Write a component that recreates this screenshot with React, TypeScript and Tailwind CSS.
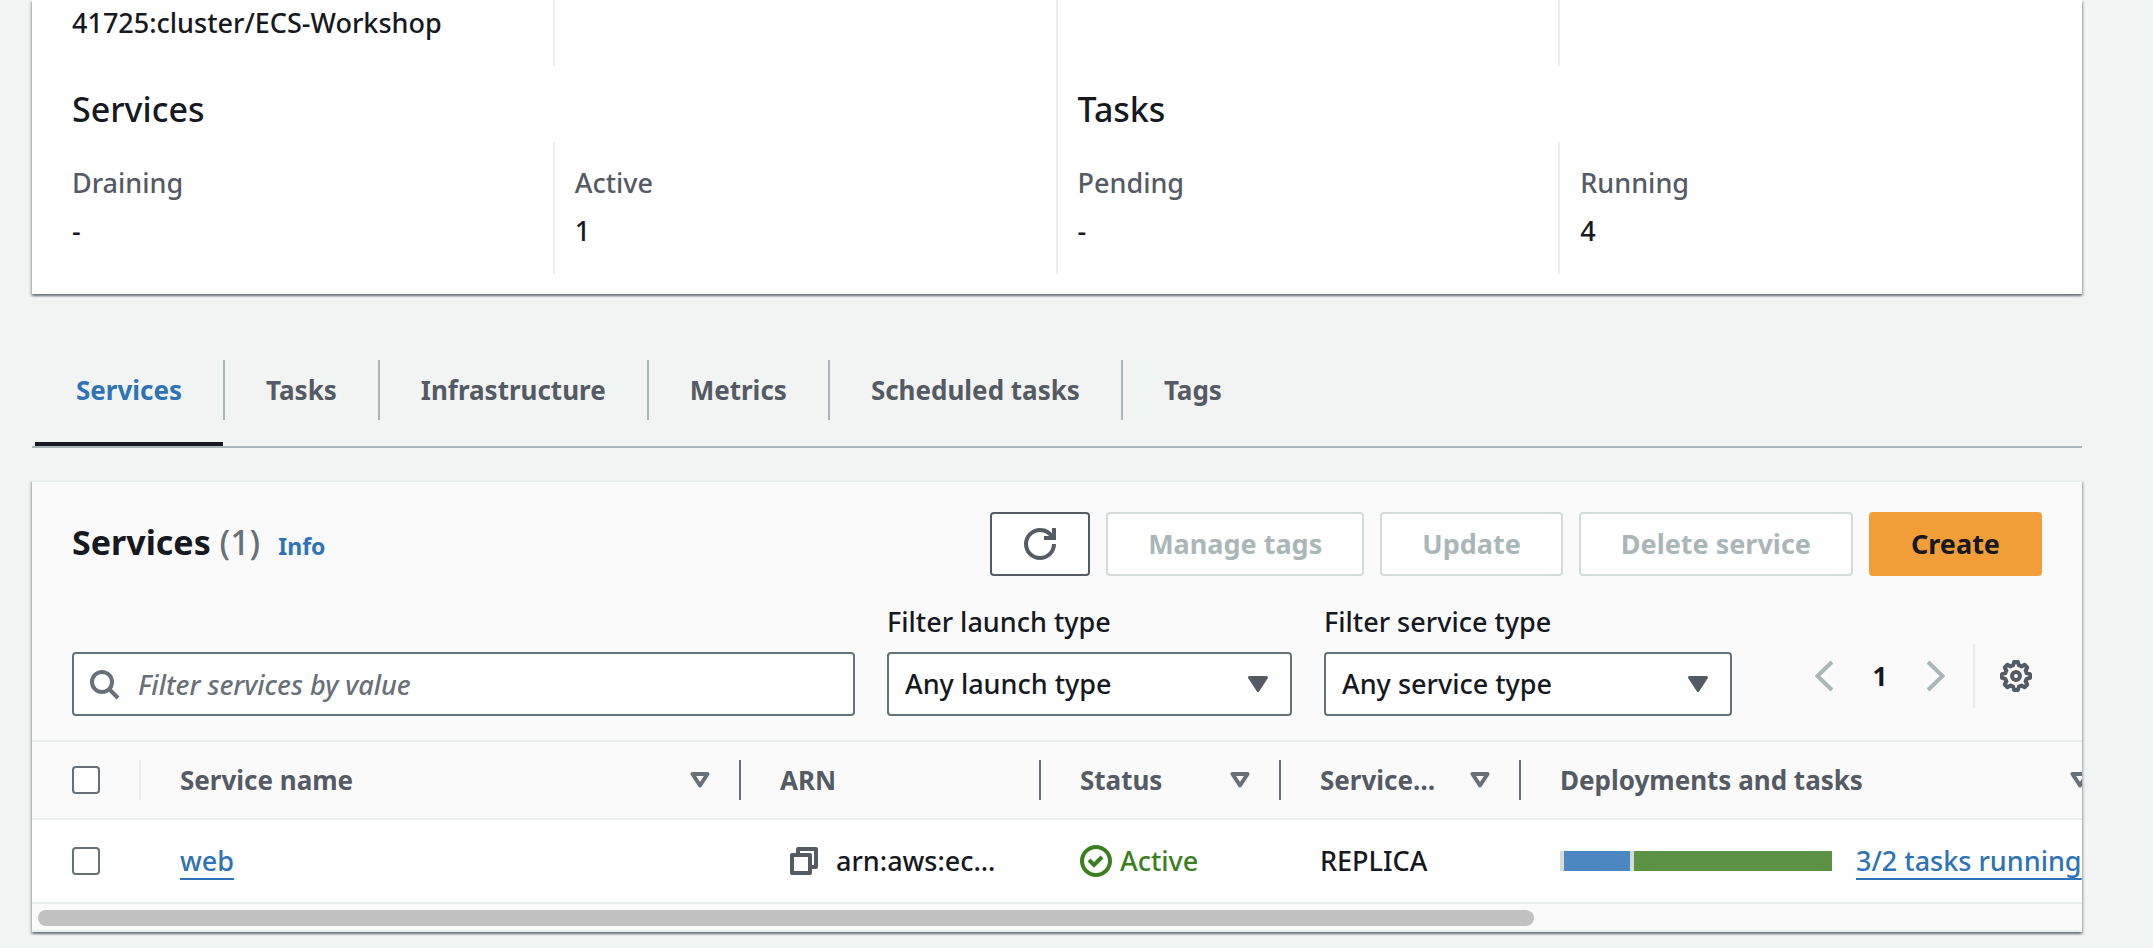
import type { ReactNode } from 'react';

const tabs = ['Services', 'Tasks', 'Infrastructure', 'Metrics', 'Scheduled tasks', 'Tags'];

const columns = [
  { label: 'Service name', width: 'w-[600px]', sortable: true },
  { label: 'ARN', width: 'w-[300px]', sortable: false },
  { label: 'Status', width: 'w-[240px]', sortable: true },
  { label: 'Service…', width: 'w-[240px]', sortable: true },
  { label: 'Deployments and tasks', width: 'w-[600px]', sortable: true },
];

const cardShadow =
  'shadow-[0_2px_2px_0_rgba(0,28,36,0.4),2px_2px_2px_0_rgba(0,28,36,0.15),-2px_2px_2px_0_rgba(0,28,36,0.15)]';

function Stat({ label, value, divider }: { label: string; value: string; divider: boolean }) {
  return (
    <div
      className={`border-l-2 pt-[21px] pb-[23px] pl-5 ${divider ? 'border-[#eaeded]' : 'border-transparent'}`}
    >
      <dt className="text-[#545b64]">{label}</dt>
      <dd className="mt-2">{value}</dd>
    </div>
  );
}

function SummaryCard() {
  return (
    <section className={`bg-white pr-[21px] pb-5 pl-[18px] ${cardShadow}`}>
      <div className="grid grid-cols-4">
        <p className="border-l-2 border-transparent pt-[3px] pb-[23px] pl-5">41725:cluster/ECS-Workshop</p>
        <div className="border-l-2 border-[#eaeded]" />
        <div className="border-l-2 border-[#eaeded]" />
        <div className="border-l-2 border-[#eaeded]" />
      </div>
      <div className="grid grid-cols-2">
        <h3 className="border-l-2 border-transparent pt-[23px] pb-[13px] pl-5 text-[34px] leading-10">Services</h3>
        <h3 className="border-l-2 border-[#eaeded] pt-[23px] pb-[13px] pl-5 text-[34px] leading-10">Tasks</h3>
      </div>
      <dl className="grid grid-cols-4">
        <Stat label="Draining" value="-" divider={false} />
        <Stat label="Active" value="1" divider />
        <Stat label="Pending" value="-" divider />
        <Stat label="Running" value="4" divider />
      </dl>
    </section>
  );
}

function Tabs() {
  return (
    <nav className="mt-[66px] flex border-b-2 border-[#aab7b8] pl-[3px]" role="tablist">
      {tabs.map((tab, i) => (
        <button
          key={tab}
          type="button"
          role="tab"
          aria-selected={i === 0}
          className={`flex flex-col text-[26px] font-bold ${i === 0 ? 'text-[#2e73b8]' : 'text-[#545b64]'}`}
        >
          <span
            className={`mb-[22px] flex h-[60px] items-center px-[41px] ${i < tabs.length - 1 ? 'border-r-2 border-[#aab7b8]' : ''}`}
          >
            {tab}
          </span>
          <span className={`mr-0.5 h-1 self-stretch ${i === 0 ? 'bg-[#16191f]' : ''}`} />
        </button>
      ))}
    </nav>
  );
}

function DisabledButton({ children }: { children: ReactNode }) {
  return (
    <button
      type="button"
      disabled
      className="h-16 rounded-[4px] border-2 border-[#d5dbdb] bg-white px-10 text-[27px] font-bold text-[#aab7b8]"
    >
      {children}
    </button>
  );
}

function RefreshIcon() {
  return (
    <svg className="size-8" viewBox="0 0 16 16" fill="none" stroke="currentColor" strokeWidth="2">
      <path d="M15 8c0 3.87-3.13 7-7 7s-7-3.13-7-7 3.13-7 7-7c2.79 0 5.2 1.63 6.33 4" />
      <path d="M10 5h5V0" />
    </svg>
  );
}

function SearchIcon() {
  return (
    <svg
      className="pointer-events-none absolute top-4 left-4 size-8 text-[#687078]"
      viewBox="0 0 16 16"
      fill="none"
      stroke="currentColor"
      strokeWidth="2"
    >
      <circle cx="7" cy="7" r="5" />
      <path d="m15 15-4.5-4.5" />
    </svg>
  );
}

function GearIcon() {
  return (
    <svg className="size-8" viewBox="0 0 16 16" fill="none" stroke="currentColor" strokeWidth="2" strokeLinejoin="round">
      <path d="M15 8.950v-1.900l-1.700-.5a5.500 5.500 0 0 0-.52-1.250l.85-1.570-1.360-1.360-1.570.85a5.500 5.500 0 0 0-1.250-.52L8.950 1h-1.900l-.5 1.700a5.500 5.500 0 0 0-1.250.52l-1.570-.85-1.360 1.360.85 1.570a5.500 5.500 0 0 0-.52 1.250L1 7.050v1.900l1.700.5c.12.440.3.860.52 1.250l-.85 1.570 1.360 1.360 1.570-.85c.390.220.810.4 1.250.52l.5 1.700h1.900l.5-1.700a5.500 5.500 0 0 0 1.250-.52l1.570.85 1.360-1.360-.85-1.570c.220-.390.4-.810.52-1.250z" />
      <circle cx="8" cy="8" r="2" />
    </svg>
  );
}

function ChevronIcon({ flip }: { flip?: boolean }) {
  return (
    <svg
      className={`h-8 w-5 ${flip ? 'rotate-180' : ''}`}
      viewBox="0 0 20 32"
      fill="none"
      stroke="currentColor"
      strokeWidth="4"
    >
      <path d="M18 2 3.500 16 18 30" />
    </svg>
  );
}

function SortIcon() {
  return (
    <svg
      className="h-4 w-5 shrink-0 text-[#687078]"
      viewBox="0 0 20 16"
      fill="none"
      stroke="currentColor"
      strokeWidth="4"
      strokeLinejoin="round"
    >
      <path d="M2.500 2h15L10 13.500z" />
    </svg>
  );
}

function CopyIcon() {
  return (
    <svg className="size-7" viewBox="0 0 28 28" fill="none" stroke="currentColor" strokeWidth="4" strokeLinejoin="round">
      <path d="M8 6V2h18v18h-4" />
      <path d="M2 8h18v18H2z" />
    </svg>
  );
}

function StatusIcon() {
  return (
    <svg className="size-8" viewBox="0 0 32 32" fill="none" stroke="currentColor" strokeWidth="4">
      <circle cx="16" cy="16" r="14" />
      <path d="m9 15 5 5 8-8" />
    </svg>
  );
}

function FilterSelect({ id, label, option, width }: { id: string; label: string; option: string; width: string }) {
  return (
    <div className={`shrink-0 ${width}`}>
      <label htmlFor={id} className="block">
        {label}
      </label>
      <div className="relative mt-[10px]">
        <select
          id={id}
          className="block h-16 w-full appearance-none rounded-[4px] border-2 border-[#687078] bg-white pr-12 pl-4"
        >
          <option>{option}</option>
        </select>
        <svg
          className="pointer-events-none absolute top-6 right-6 h-4 w-5"
          viewBox="0 0 20 16"
          fill="#545b64"
          stroke="#545b64"
          strokeWidth="3"
          strokeLinejoin="round"
        >
          <path d="M1.500 1.500h17L10 14.500z" />
        </svg>
      </div>
    </div>
  );
}

function Checkbox({ label }: { label: string }) {
  return (
    <input
      type="checkbox"
      aria-label={label}
      className="block size-7 appearance-none rounded-[4px] border-2 border-[#687078] bg-white"
    />
  );
}

function ServicesTable() {
  return (
    <div className="overflow-hidden border-t-2 border-[#eaeded]">
      <table className="w-[2089px] table-fixed border-separate border-spacing-0 text-left">
        <thead>
          <tr className="h-[78px]">
            <th className="w-[109px] border-b-2 border-[#eaeded] p-0">
              <div className="flex h-10 items-center border-r-2 border-[#eaeded] pl-10">
                <Checkbox label="Select all services" />
              </div>
            </th>
            {columns.map((column, i) => (
              <th key={column.label} className={`border-b-2 border-[#eaeded] p-0 ${column.width}`}>
                <div
                  className={`flex h-10 items-center justify-between border-r-2 pr-[29px] pl-[39px] text-[26px] font-bold text-[#545b64] ${
                    i < columns.length - 1 ? 'border-[#687078]' : 'border-transparent'
                  }`}
                >
                  {column.label}
                  {column.sortable && <SortIcon />}
                </div>
              </th>
            ))}
          </tr>
        </thead>
        <tbody className="bg-white">
          <tr className="h-[84px]">
            <td className="border-b-2 border-[#eaeded] p-0 pl-10">
              <Checkbox label="Select web" />
            </td>
            <td className="border-b-2 border-[#eaeded] p-0 pl-[39px]">
              <a href="#web" className="text-[#2e73b8] underline decoration-2 underline-offset-[7px]">
                web
              </a>
            </td>
            <td className="border-b-2 border-[#eaeded] p-0 pl-[49px]">
              <div className="flex items-center gap-[18px]">
                <button type="button" aria-label="Copy ARN" className="text-[#545b64]">
                  <CopyIcon />
                </button>
                <span>arn:aws:ec…</span>
              </div>
            </td>
            <td className="border-b-2 border-[#eaeded] p-0 pl-[39px]">
              <div className="flex items-center gap-2 text-[#3b7f20]">
                <StatusIcon />
                <span>Active</span>
              </div>
            </td>
            <td className="border-b-2 border-[#eaeded] p-0 pl-[39px]">REPLICA</td>
            <td className="border-b-2 border-[#eaeded] p-0 pl-[39px]">
              <div className="flex items-center gap-6">
                <div className="flex h-5 w-[272px] gap-1 bg-[#d5dbdb] pl-1">
                  <div className="w-[66px] bg-[#4d87c1]" />
                  <div className="flex-1 bg-[#5c9244]" />
                </div>
                <a
                  href="#deployments"
                  className="whitespace-nowrap text-[#2e73b8] underline decoration-2 underline-offset-[7px] [text-decoration-skip-ink:none]"
                >
                  3/2 tasks running
                </a>
              </div>
            </td>
          </tr>
        </tbody>
      </table>
      <div className="h-7 border-b-2 border-[#eaeded] px-[6px] pt-[6px]">
        <div className="h-4 w-[73.4%] rounded-full bg-[#c1c1c1]" />
      </div>
    </div>
  );
}

function ServicesCard() {
  return (
    <section className={`mt-8 border-t-2 border-[#eaeded] bg-[#fafafa] ${cardShadow}`}>
      <header className="flex items-center justify-between px-10 pt-[30px]">
        <div className="flex items-baseline">
          <h2 className="text-[34px] leading-10 font-bold">
            Services <span className="font-medium text-[#687078]">(1)</span>
          </h2>
          <a href="#info" className="ml-[18px] text-[23px] font-bold text-[#2e73b8]">
            Info
          </a>
        </div>
        <div className="flex gap-4">
          <button
            type="button"
            aria-label="Refresh"
            className="flex h-16 w-[100px] items-center justify-center rounded-[4px] border-2 border-[#545b64] bg-white text-[#545b64]"
          >
            <RefreshIcon />
          </button>
          <DisabledButton>Manage tags</DisabledButton>
          <DisabledButton>Update</DisabledButton>
          <DisabledButton>Delete service</DisabledButton>
          <button
            type="button"
            className="h-16 rounded-[4px] border-2 border-[#f19e38] bg-[#f19e38] px-10 text-[27px] font-bold"
          >
            Create
          </button>
        </div>
      </header>
      <div className="flex items-end gap-8 px-10 pt-[26px] pb-6">
        <div className="relative min-w-0 flex-1">
          <SearchIcon />
          <input
            type="text"
            aria-label="Filter services by value"
            placeholder="Filter services by value"
            className="block h-16 w-full rounded-[4px] border-2 border-[#687078] bg-white pr-4 pl-16 placeholder:text-[#687078] placeholder:italic"
          />
        </div>
        <FilterSelect id="launch-type" label="Filter launch type" option="Any launch type" width="w-[405px]" />
        <FilterSelect id="service-type" label="Filter service type" option="Any service type" width="w-[408px]" />
        <div className="mb-2 ml-[50px] flex h-16 shrink-0 items-center">
          <button type="button" aria-label="Previous page" className="text-[#aab7b8]">
            <ChevronIcon />
          </button>
          <button type="button" className="w-[92px] text-[26px] font-bold">
            1
          </button>
          <button type="button" aria-label="Next page" className="text-[#aab7b8]">
            <ChevronIcon flip />
          </button>
          <button
            type="button"
            aria-label="Preferences"
            className="ml-[27px] flex h-16 items-center border-l-2 border-[#eaeded] pr-[10px] pl-[25px] text-[#545b64]"
          >
            <GearIcon />
          </button>
        </div>
      </div>
      <ServicesTable />
    </section>
  );
}

export default function App() {
  return (
    <main className="min-h-screen bg-[#f2f3f3] pr-[71px] pb-4 pl-8 font-['Noto_Sans','Open_Sans',sans-serif] text-[27px] leading-10 font-medium text-[#16191f]">
      <SummaryCard />
      <Tabs />
      <ServicesCard />
    </main>
  );
}
